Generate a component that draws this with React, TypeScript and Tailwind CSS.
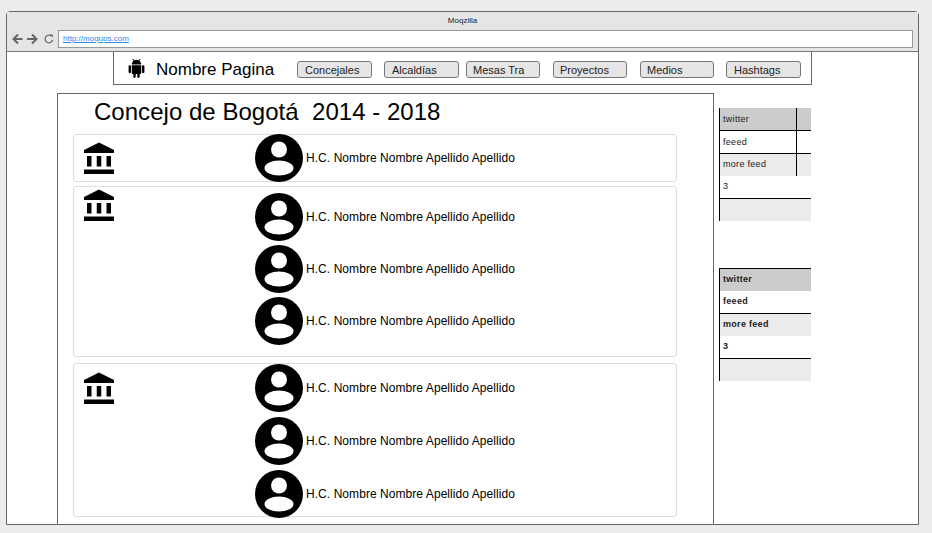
import { MdAccountBalance } from 'react-icons/md';

const navItems = [
  { label: 'Concejales', cls: 'w-[75px] pl-[7px]' },
  { label: 'Alcaldías', cls: 'ml-[12px] w-[75px] pl-[7px]' },
  { label: 'Mesas Tra', cls: 'ml-[7px] w-[74px] pl-[6px]' },
  { label: 'Proyectos', cls: 'ml-[13px] w-[74px] pl-[6px]' },
  { label: 'Medios', cls: 'ml-[13px] w-[74px] pl-[6px]' },
  { label: 'Hashtags', cls: 'ml-[12px] w-[75px] pl-[7px]' },
];

const NAME = 'H.C. Nombre Nombre Apellido Apellido';

function AndroidIcon() {
  return (
    <svg width="19" height="19" viewBox="0 0 24 24" className="ml-[13px] shrink-0">
      <path
        fill="#000"
        d="M6 18c0 .55.45 1 1 1h1v3.5c0 .83.67 1.5 1.5 1.5s1.5-.67 1.5-1.5V19h2v3.5c0 .83.67 1.5 1.5 1.5s1.5-.67 1.5-1.5V19h1c.55 0 1-.45 1-1V8H6v10zM3.5 8C2.67 8 2 8.67 2 9.5v7c0 .83.67 1.5 1.5 1.5S5 17.33 5 16.5v-7C5 8.67 4.33 8 3.5 8zm17 0c-.83 0-1.5.67-1.5 1.5v7c0 .83.67 1.5 1.5 1.5s1.5-.67 1.5-1.5v-7c0-.83-.67-1.5-1.5-1.5zm-4.97-5.84l1.3-1.3c.2-.2.2-.51 0-.71-.2-.2-.51-.2-.71 0l-1.48 1.48C13.85 1.23 12.95 1 12 1c-.96 0-1.86.23-2.66.63L7.85.15c-.2-.2-.51-.2-.71 0-.2.2-.2.51 0 .71l1.31 1.31C6.97 3.26 6 5.01 6 7h12c0-1.99-.97-3.75-2.47-4.84z"
      />
    </svg>
  );
}

function Avatar() {
  return (
    <svg width="48" height="48" viewBox="0 0 48 48" className="shrink-0">
      <circle cx="24" cy="24" r="24" fill="#000" />
      <circle cx="24" cy="15.5" r="8" fill="#fff" />
      <ellipse cx="24" cy="34" rx="14.5" ry="7.5" fill="#fff" />
    </svg>
  );
}

function Card({ rows, cls, iconCls, rowsCls }: { rows: number; cls: string; iconCls: string; rowsCls: string }) {
  return (
    <div className={`flex border border-[#ddd] rounded-[3px] ml-[15px] w-[604px] ${cls}`}>
      <div className={`w-[181px] shrink-0 pl-[7px] ${iconCls}`}>
        <MdAccountBalance size={36} color="#000" />
      </div>
      <div className={`flex flex-col ${rowsCls}`}>
        {Array.from({ length: rows }).map((_, i) => (
          <div key={i} className="flex items-center h-[48px]">
            <Avatar />
            <span className="ml-[3px] text-[12px] tracking-[0.06px] leading-none text-black">{NAME}</span>
          </div>
        ))}
      </div>
    </div>
  );
}

function Feed({ bold }: { bold?: boolean }) {
  const text = `text-[9px] tracking-[0.3px] text-[#222] pl-[3px] flex items-center ${bold ? 'font-bold' : ''}`;
  const divider = bold ? '' : 'border-r border-black';
  const nudge = bold ? '' : 'pt-px';
  return (
    <div className="w-[92px] border-l border-black">
      <div className={`h-[23px] bg-[#cccccc] flex ${bold ? 'border-t border-black' : 'border-b border-black'}`}>
        <div className={`w-[77px] ${divider} ${nudge} ${text}`}>twitter</div>
      </div>
      <div className="h-[23px] bg-white border-b border-black flex">
        <div className={`w-[77px] ${divider} ${nudge} ${text}`}>feeed</div>
      </div>
      <div className="h-[22px] bg-[#ebebeb] flex">
        <div className={`w-[77px] ${divider} ${text}`}>more feed</div>
      </div>
      <div className={`h-[23px] bg-white border-b border-black ${text}`}>3</div>
      <div className="h-[22px] bg-[#ebebeb]" />
    </div>
  );
}

export default function App() {
  return (
    <div className="h-[533px] w-[932px] bg-[#ececec] pt-[11px] pl-[6px] overflow-hidden font-['Liberation_Sans',Arial,sans-serif]">
      <div className="w-[913px] h-[514px] border border-[#666] rounded-t-[4px] bg-white flex flex-col">
        {/* BROWSER BAR */}
        <div className="h-[40px] shrink-0 bg-[#e5e5e5] border-b border-[#777] flex flex-col">
          <div className="h-[18px] text-center text-[8px] leading-[17px] text-[#222]">Moqzilla</div>
          <div className="flex items-center h-[18px]">
            <svg width="48" height="14" viewBox="0 0 48 14" className="ml-[5px] shrink-0">
              <path d="M10.5 7H2M6 2.5L1.5 7 6 11.5" fill="none" stroke="#666" strokeWidth="2" />
              <path d="M15 7h9M20 2.5L24.5 7 20 11.5" fill="none" stroke="#666" strokeWidth="2" />
              <path d="M39.5 4.2A3.8 3.8 0 1 0 40.6 8" fill="none" stroke="#666" strokeWidth="1.2" />
              <path d="M37.8 2.6h3v3z" fill="#666" />
            </svg>
            <div className="ml-[-2px] w-[855px] h-[18px] bg-white border border-[#999] pl-[4px] flex items-center">
              <span className="text-[8px] text-[#2f86e8] underline">http://moqups.com</span>
            </div>
          </div>
        </div>

        {/* NAV */}
        <div className="ml-[106px] w-[699px] h-[33px] shrink-0 border-x border-b border-[#666] flex items-start">
          <div className="w-[183px] h-full shrink-0 flex items-center">
            <AndroidIcon />
            <span className="ml-[10px] mt-[3px] text-[17px] text-black leading-none">Nombre Pagina</span>
          </div>
          {navItems.map((item) => (
            <button
              key={item.label}
              className={`${item.cls} mt-[9px] h-[17px] shrink-0 bg-[#e5e5e5] border border-[#777] rounded-[3px] text-left pt-px text-[11px] leading-none text-[#222]`}
            >
              {item.label}
            </button>
          ))}
        </div>

        {/* CONTENT */}
        <div className="flex mt-[8px] ml-[50px] grow">
          <div className="w-[657px] border-l border-t border-r border-[#666] shrink-0">
            <h1 className="h-[40px] pl-[36px] text-[24px] tracking-[0.03px] leading-[36px] text-black whitespace-pre">Concejo de Bogotá  2014 - 2018</h1>
            <Card rows={1} cls="h-[48px]" iconCls="pt-[6px]" rowsCls="-mt-px" />
            <Card rows={3} cls="mt-[4px] h-[171px]" iconCls="pt-px" rowsCls="pt-[6px] gap-[4px]" />
            <Card rows={3} cls="mt-[6px] h-[154px]" iconCls="pt-[7px]" rowsCls="gap-[5px]" />
          </div>
          <div className="ml-[5px] mt-[15px]">
            <Feed />
            <div className="h-[47px]" />
            <Feed bold />
          </div>
        </div>
      </div>
    </div>
  );
}
